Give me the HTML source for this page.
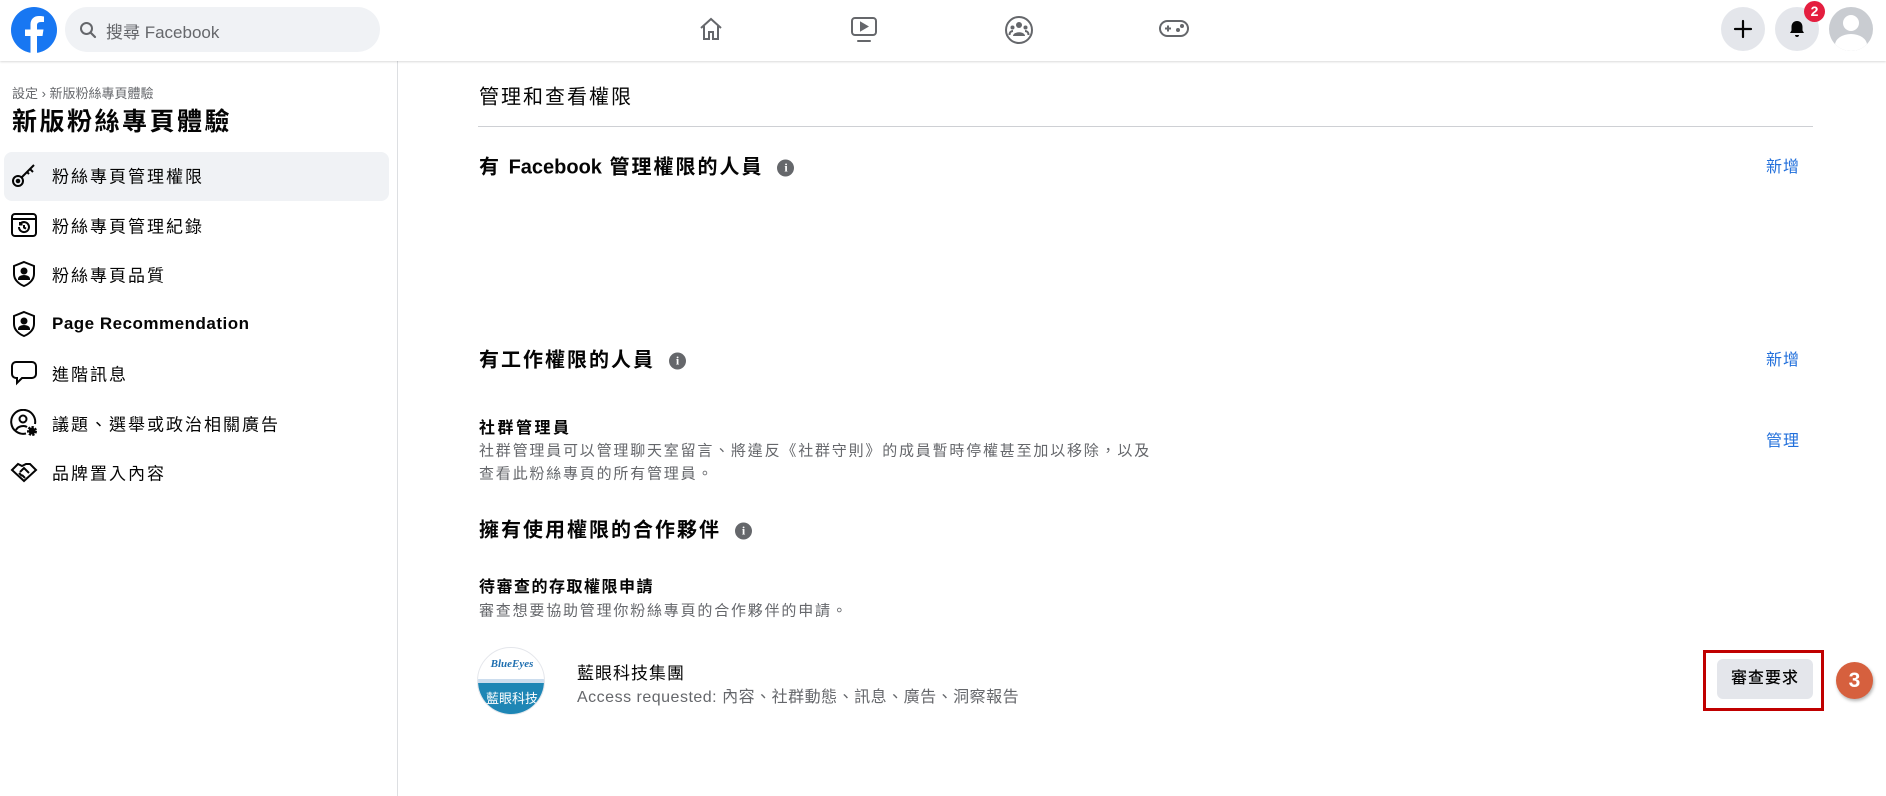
<!DOCTYPE html>
<html><head><meta charset="utf-8"><style>
*{margin:0;padding:0;box-sizing:border-box}
body{width:1886px;height:796px;overflow:hidden;background:#fff;font-family:"Liberation Sans","Noto Sans CJK TC",sans-serif;color:#050505;position:relative}
.a{position:absolute;white-space:nowrap}
.hdr{position:absolute;left:0;top:0;width:1886px;height:61px;background:#fff;box-shadow:0 1px 2px rgba(0,0,0,.15);z-index:2}
.circ{position:absolute;width:44px;height:44px;border-radius:50%;background:#e4e6eb}
.side{position:absolute;left:0;top:61px;width:398px;height:735px;border-right:1px solid #dddfe2}
.it{position:absolute;left:52px;font-size:17px;letter-spacing:2px;transform:translateY(-50%)}
.ic{position:absolute;left:10px;width:28px;height:28px;transform:translateY(-50%)}
.h{position:absolute;left:479px;font-size:20px;letter-spacing:2px;transform:translateY(-50%);font-weight:bold}
.lnk{position:absolute;left:1766px;color:#216fdb;font-size:16px;letter-spacing:1px;transform:translateY(-50%)}
.info{display:inline-block;width:17px;height:17px;border-radius:50%;background:#65676b;color:#fff;font-size:12px;text-align:center;line-height:17px;font-weight:bold;vertical-align:2px;margin-left:14px;font-family:"Liberation Serif",serif;letter-spacing:0}
.sub{position:absolute;left:479px;font-size:16px;font-weight:bold;letter-spacing:2.5px;transform:translateY(-50%)}
.sub2{letter-spacing:1.5px}
.desc{position:absolute;left:479px;font-size:15px;color:#65676b;letter-spacing:1.8px;transform:translateY(-50%)}
</style></head><body>
<div class="hdr">
  <svg class="a" style="left:11px;top:7px" width="46" height="46" viewBox="0 0 46 46"><circle cx="23" cy="23" r="23" fill="#1877f2"/><path d="M26 46V29h5.5l1-6.5H26v-4c0-2 1-3.5 4-3.5h3V9.5c-1-.2-3-.5-5-.5-5 0-8.5 3-8.5 8.5v5H14V29h5.5v17z" fill="#fff"/></svg>
  <div class="a" style="left:65px;top:7px;width:315px;height:45px;border-radius:23px;background:#f0f2f5"></div>
  <svg class="a" style="left:79px;top:21px" width="18" height="18" viewBox="0 0 18 18"><circle cx="7.5" cy="7.5" r="5.5" fill="none" stroke="#65676b" stroke-width="2"/><path d="M11.5 11.5l4.5 4.5" stroke="#65676b" stroke-width="2.2" stroke-linecap="round"/></svg>
  <div class="a" style="left:106px;top:18px;font-size:17px;color:#65676b">搜尋 Facebook</div>
  <svg class="a" style="left:697px;top:15px" width="28" height="28" viewBox="0 0 28 28" fill="none" stroke="#65676b" stroke-width="2"><path d="M4 13L14 4l10 9M7 11v13h5v-7h4v7h5V11"/></svg>
  <svg class="a" style="left:850px;top:15px" width="28" height="30" viewBox="0 0 28 30" fill="none" stroke="#65676b" stroke-width="2"><rect x="2" y="3" width="24" height="17" rx="3"/><path d="M11 8v7l6-3.5z" fill="#65676b"/><path d="M8 26h12" stroke-linecap="round"/></svg>
  <svg class="a" style="left:1004px;top:15px" width="30" height="30" viewBox="0 0 30 30"><circle cx="15" cy="15" r="13" fill="none" stroke="#65676b" stroke-width="2"/><circle cx="15" cy="10" r="3" fill="#65676b"/><circle cx="8.5" cy="12.5" r="2" fill="#65676b"/><circle cx="21.5" cy="12.5" r="2" fill="#65676b"/><path d="M9 21c0-5 12-5 12 0z" fill="#65676b"/><path d="M5.5 20c0-3 2-4 3.5-4M24.5 20c0-3-2-4-3.5-4" stroke="#65676b" stroke-width="2" fill="none"/></svg>
  <svg class="a" style="left:1158px;top:18px" width="32" height="22" viewBox="0 0 32 22" fill="none" stroke="#65676b" stroke-width="2"><rect x="2" y="3" width="28" height="15" rx="7.5"/><path d="M7 10.5h6M10 7.5v6"/><circle cx="20" cy="12" r="1" fill="#65676b"/><circle cx="24" cy="8" r="1" fill="#65676b"/></svg>
  <div class="circ" style="left:1721px;top:7px"></div>
  <svg class="a" style="left:1733px;top:19px" width="20" height="20" viewBox="0 0 20 20"><path d="M10 2v16M2 10h16" stroke="#050505" stroke-width="2.2" stroke-linecap="round"/></svg>
  <div class="circ" style="left:1775px;top:7px"></div>
  <svg class="a" style="left:1787px;top:19px" width="20" height="20" viewBox="0 0 20 20"><path d="M10 2c-3.5 0-5.5 2.5-5.5 6v3.5L3 14h14l-1.5-2.5V8c0-3.5-2-6-5.5-6z" fill="#050505"/><path d="M8 16h4c0 1.2-.9 2-2 2s-2-.8-2-2z" fill="#050505"/></svg>
  <div class="a" style="left:1804px;top:1px;width:21px;height:21px;border-radius:50%;background:#e41e3f;color:#fff;font-size:14px;font-weight:bold;text-align:center;line-height:21px">2</div>
  <div class="circ" style="left:1829px;top:7px;overflow:hidden;background:#c9ccd1">
    <div class="a" style="left:14px;top:8px;width:16px;height:16px;border-radius:50%;background:#fff"></div>
    <div class="a" style="left:6px;top:27px;width:32px;height:22px;border-radius:50%;background:#fff"></div>
  </div>
</div>

<div class="side">
  <div class="a" style="left:12px;top:22px;font-size:13px;color:#65676b">設定 › 新版粉絲專頁體驗</div>
  <div class="a" style="left:12px;top:41px;font-size:25px;font-weight:bold;letter-spacing:2.5px">新版粉絲專頁體驗</div>
  <div class="a" style="left:4px;top:91px;width:385px;height:49px;border-radius:8px;background:#f0f2f5"></div>
</div>
<svg class="ic" style="top:175px" viewBox="0 0 28 28" fill="none" stroke="#050505" stroke-width="2"><circle cx="8" cy="20" r="5"/><circle cx="8" cy="20" r="1.3" fill="#050505"/><path d="M11.5 16.5L24 4M20 8l3 3M17 11l2 2"/></svg>
<div class="it" style="top:175px">粉絲專頁管理權限</div>
<svg class="ic" style="top:225px" viewBox="0 0 28 28" fill="none" stroke="#050505" stroke-width="2"><rect x="2" y="3" width="24" height="22" rx="3"/><path d="M2 8h24"/><path d="M9 16a5 5 0 1 0 1.5-3.5M10 11v2.5h2.5M14 14v2.5l2 1.2"/></svg>
<div class="it" style="top:225px">粉絲專頁管理紀錄</div>
<svg class="ic" style="top:274px" viewBox="0 0 28 28" fill="none" stroke="#050505" stroke-width="2"><path d="M14 2l10 4v8c0 6-5 10-10 12C9 24 4 20 4 14V6z"/><circle cx="14" cy="11" r="2.5" fill="#050505"/><path d="M9 19c0-4 10-4 10 0z" fill="#050505"/></svg>
<div class="it" style="top:274px">粉絲專頁品質</div>
<svg class="ic" style="top:324px" viewBox="0 0 28 28" fill="none" stroke="#050505" stroke-width="2"><path d="M14 2l10 4v8c0 6-5 10-10 12C9 24 4 20 4 14V6z"/><circle cx="14" cy="11" r="2.5" fill="#050505"/><path d="M9 19c0-4 10-4 10 0z" fill="#050505"/></svg>
<div class="it" style="top:324px;letter-spacing:0.5px;font-weight:600;font-size:17px">Page Recommendation</div>
<svg class="ic" style="top:373px" viewBox="0 0 28 28" fill="none" stroke="#050505" stroke-width="2"><path d="M6 3h16a4 4 0 0 1 4 4v8a4 4 0 0 1-4 4H12l-5 5v-5H6a4 4 0 0 1-4-4V7a4 4 0 0 1 4-4z"/></svg>
<div class="it" style="top:373px">進階訊息</div>
<svg class="ic" style="top:423px" viewBox="0 0 28 28" fill="none" stroke="#050505" stroke-width="2"><path d="M16 24.5A12 12 0 1 1 25 15"/><circle cx="13" cy="10" r="3.5"/><path d="M6 21c2-4 8-5 11-3"/><circle cx="22" cy="22" r="3.5" fill="#050505" stroke-dasharray="2 1.2" stroke-width="3"/></svg>
<div class="it" style="top:423px">議題、選舉或政治相關廣告</div>
<svg class="ic" style="top:472px" viewBox="0 0 28 28" fill="none" stroke="#050505" stroke-width="2"><path d="M2 12l6-6 4 2 4-2 4 0 6 6-12 11z"/><path d="M10 14l4-4 5 5M12 17l3 3M9 15l3 3"/></svg>
<div class="it" style="top:472px">品牌置入內容</div>

<div class="h" style="top:95px;font-weight:normal">管理和查看權限</div>
<div class="a" style="left:478px;top:126px;width:1335px;height:1px;background:#ced0d4"></div>
<div class="h" style="top:165px">有 <span style="letter-spacing:0">Facebook</span> 管理權限的人員<span class="info">i</span></div>
<div class="lnk" style="top:165px">新增</div>
<div class="h" style="top:358px">有工作權限的人員<span class="info">i</span></div>
<div class="lnk" style="top:358px">新增</div>
<div class="sub" style="top:426px">社群管理員</div>
<div class="desc" style="top:450px">社群管理員可以管理聊天室留言、將違反《社群守則》的成員暫時停權甚至加以移除，以及</div>
<div class="desc" style="top:473px">查看此粉絲專頁的所有管理員。</div>
<div class="lnk" style="top:439px">管理</div>
<div class="h" style="top:528px">擁有使用權限的合作夥伴<span class="info">i</span></div>
<div class="sub sub2" style="top:585px">待審查的存取權限申請</div>
<div class="desc" style="top:610px">審查想要協助管理你粉絲專頁的合作夥伴的申請。</div>

<div class="a" style="left:477px;top:647px;width:68px;height:68px;border-radius:50%;overflow:hidden;background:#fff;border:1px solid #e4e6eb">
  <div class="a" style="left:0;top:10px;width:68px;text-align:center;font-size:11px;font-weight:bold;font-style:italic;color:#1f6fb0;font-family:'Liberation Serif',serif">BlueEyes</div>
  <div class="a" style="left:0;top:31px;width:68px;height:4px;background:#cde"></div>
  <div class="a" style="left:0;top:35px;width:68px;height:33px;background:#1e86b5"></div>
  <div class="a" style="left:0;top:40px;width:68px;text-align:center;font-size:13px;color:#fff">藍眼科技</div>
</div>
<div class="a" style="left:577px;top:659px;font-size:17px;letter-spacing:1px">藍眼科技集團</div>
<div class="a" style="left:577px;top:683px;font-size:16px;color:#65676b;letter-spacing:.5px">Access requested: 內容、社群動態、訊息、廣告、洞察報告</div>

<div class="a" style="left:1703px;top:650px;width:121px;height:61px;border:3px solid #c00000"></div>
<div class="a" style="left:1717px;top:659px;width:96px;height:40px;border-radius:6px;background:#e4e6eb;font-size:16px;font-weight:500;text-align:center;line-height:40px;letter-spacing:1px">審查要求</div>
<div class="a" style="left:1836px;top:662px;width:37px;height:37px;border-radius:50%;background:#d6603e;color:#fff;font-size:21px;font-weight:bold;text-align:center;line-height:37px;box-shadow:1px 2px 3px rgba(0,0,0,.3)">3</div>
</body></html>
